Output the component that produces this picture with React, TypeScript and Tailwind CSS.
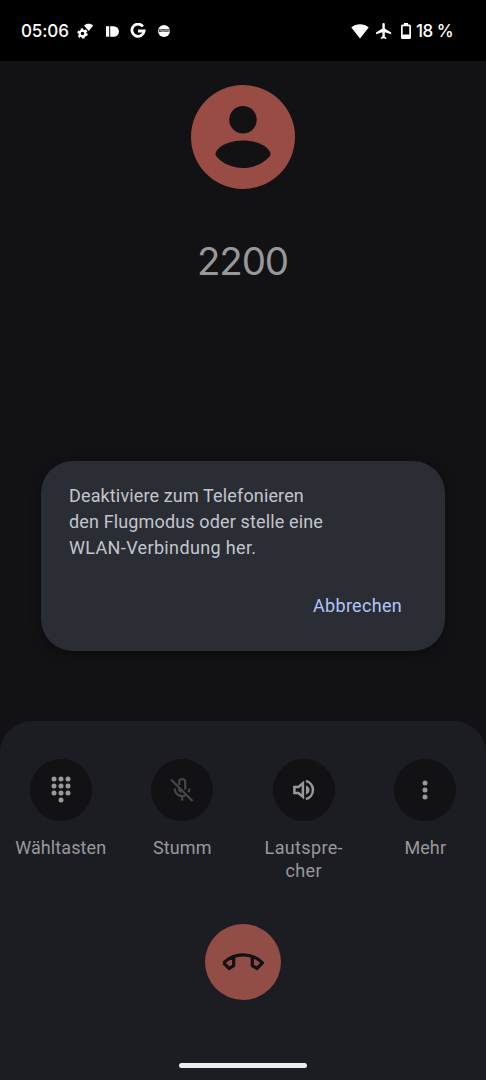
import React from 'react';

interface CallActionProps {
  label: React.ReactNode;
  children: React.ReactNode;
}

const StatusBar: React.FC = () => (
  <header className="h-[61px] bg-black flex items-center pt-[1px] pl-[21px] pr-[33px] text-white font-['Inter'] font-medium text-[17px]">
    <span className="mt-[1px] w-[49px] tracking-[-0.1px] whitespace-nowrap">05:06</span>

    {/* Gear with signal wedge */}
    <svg className="ml-[7px] mb-[1px] shrink-0" width="17" height="17" viewBox="0 0 17 17" fill="currentColor">
      <path d="M7 3.600C9.500 1.200 13.700 1.200 16.200 3.600L11.800 9Z" />
      <circle cx="5.500" cy="11.500" r="2.900" fill="none" stroke="currentColor" strokeWidth="2.200" />
      <circle cx="5.500" cy="11.500" r="4.400" fill="none" stroke="currentColor" strokeWidth="1.600" strokeDasharray="2.400 2.200" />
    </svg>
    <svg className="ml-[12px] shrink-0" width="13" height="11" viewBox="0 0 13 11" fill="currentColor">
      <rect width="3.200" height="10.500" y="0.200" />
      <path d="M4.200 .2h3.500a5.200 5.200 0 0 1 0 10.500H4.200z" />
    </svg>
    <svg className="ml-[11px] shrink-0" width="16" height="16" viewBox="0 0 16 16" fill="none" stroke="currentColor" strokeWidth="2.800">
      <path d="M12.900 3.500A6.100 6.100 0 1 0 14.100 8H8" />
    </svg>
    <span className="ml-[12px] w-[12px] h-[12px] rounded-full bg-white flex items-center justify-center shrink-0">
      <span className="text-[4px] leading-[4px] font-bold tracking-[-0.2px] text-black">simon</span>
    </span>

    <svg className="ml-auto shrink-0" width="18" height="15" viewBox="0 0 18 15" fill="currentColor">
      <path d="M0.300 3.400C5.200-.8 12.800-.8 17.700 3.400L9 14.600Z" />
    </svg>
    <svg className="ml-[7px] shrink-0" width="16" height="16" viewBox="2 2 20 20" fill="currentColor">
      <path d="M21 16v-2l-8-5V3.500c0-.83-.67-1.500-1.500-1.500S10 2.670 10 3.500V9l-8 5v2l8-2.500V19l-2 1.500V22l3.500-1 3.500 1v-1.500L13 19v-5.500l8 2.500z" />
    </svg>
    <svg className="ml-[9px] shrink-0" width="10" height="16" viewBox="0 0 10 16" fill="currentColor">
      <path fillRule="evenodd" d="M3 0h4v1.500h1.500Q10 1.500 10 3v11.500Q10 16 8.500 16h-7Q0 16 0 14.500V3Q0 1.500 1.500 1.500H3zM1.700 3.200v8.200h6.600V3.200z" />
    </svg>
    <span className="ml-[5px] mt-[1px] w-[37px] tracking-[-0.5px] whitespace-nowrap">18 %</span>
  </header>
);

const CallAction: React.FC<CallActionProps> = ({ label, children }) => (
  <div className="flex flex-col items-center">
    <button className="w-[62px] h-[62px] rounded-full bg-[#121214] flex items-center justify-center">
      {children}
    </button>
    <span className="mt-[15.5px] text-center text-[18px] leading-[23px] tracking-[0.1px] text-[#98989a]">{label}</span>
  </div>
);

const App: React.FC = () => (
  <div className="w-[486px] h-[1080px] bg-[#121214] flex flex-col overflow-hidden font-['Roboto',sans-serif]">
    <StatusBar />

    {/* Caller */}
    <section className="h-[400px] pt-[24px] pr-[1px] flex flex-col items-center">
      <svg width="104" height="104" viewBox="0 0 104 104">
        <circle cx="52" cy="52" r="52" fill="#984c44" />
        <circle cx="52" cy="34.700" r="13.800" fill="#121214" />
        <path d="M25 67C29 59.500 40 55.500 52 55.500S75 59.500 79 67Q80.200 69.500 78.500 71.500C72 79 62 83 52 83S32 79 25.500 71.500Q23.800 69.500 25 67Z" fill="#121214" />
      </svg>
      <h1 className="mt-[49px] font-['Inter'] font-normal text-[38.5px] leading-[46px] tracking-[-1.1px] text-[#98989a]">2200</h1>
    </section>

    {/* Airplane mode dialog */}
    <section className="mx-[41px] h-[190px] rounded-[32px] bg-[#2b2d34] shadow-[0_3px_12px_rgba(0,0,0,0.35)] pt-[22px] pl-[28px] pr-[43px] flex flex-col">
      <p className="text-[18px] leading-[26px] tracking-[0.14px] text-[#c3c5cd] whitespace-nowrap">
        Deaktiviere zum Telefonieren<br />
        den Flugmodus oder stelle eine<br />
        <span className="tracking-[0.35px]">WLAN-Verbindung her.</span>
      </p>
      <button className="mt-[32px] self-end text-[18px] leading-[26px] tracking-[0.3px] text-[#b1c5fb]">Abbrechen</button>
    </section>

    {/* In-call controls */}
    <section className="mt-[70px] flex-1 rounded-t-[32px] bg-[#1c1d22] pt-[37.5px] flex flex-col items-center">
      <div className="w-full h-[165.5px] grid grid-cols-4">
        <CallAction label="Wähltasten">
          <svg width="20" height="28" viewBox="0 0 20 28" fill="#98989e">
            {[3, 10, 17].map(y => [3, 10, 17].map(x => <circle key={`${x}-${y}`} cx={x} cy={y} r="2.500" />))}
            <circle cx="10" cy="24" r="2.500" />
          </svg>
        </CallAction>
        <CallAction label="Stumm">
          <svg width="26" height="26" viewBox="0 0 26 26" fill="none" stroke="#45464a" strokeWidth="2.200">
            <path d="M10.200 8V5a3 3 0 0 1 6 0v7.500M5.800 11.500a7.300 7.300 0 0 0 11 6.500M20.400 11.500q0 2-1 3.700M13.100 19v4.500M10.200 11v1q0 2.500 2.500 3" />
            <path d="M2 2.500L23.500 24" />
          </svg>
        </CallAction>
        <CallAction label={<span className="tracking-[0.35px]">Lautspre-<br />cher</span>}>
          <svg width="24" height="24" viewBox="0 0 24 24" fill="none" stroke="#98989e" strokeWidth="2.500">
            <path d="M2.400 9h4L10.900 5.200v13.600L6.400 15h-4z" />
            <path d="M14 3a9.300 9.300 0 0 1 0 18" />
            <path d="M14 7.500v9q3.500-1.500 3.500-4.500t-3.500-4.500z" fill="#98989e" stroke="none" />
          </svg>
        </CallAction>
        <CallAction label="Mehr">
          <svg width="8" height="22" viewBox="0 0 8 22" fill="#98989e">
            {[4, 11, 18].map(y => <circle key={y} cx="4" cy={y} r="2.500" />)}
          </svg>
        </CallAction>
      </div>

      <button className="w-[76px] h-[76px] rounded-full bg-[#934d47] flex items-center justify-center">
        <svg width="44" height="20" viewBox="0 0 44 20" fill="none" stroke="#121214" strokeWidth="3.200" strokeLinejoin="round">
          <path d="M2.500 10.800Q11 2.800 22 2.800T41.500 10.800L35.800 16.500L31.300 13.600V5M2.500 10.800L8.200 16.500L12.700 13.600V5" />
        </svg>
      </button>

      <div className="mt-[63px] w-[128px] h-[5px] rounded-full bg-[#ececec]" />
    </section>
  </div>
);

export default App;
